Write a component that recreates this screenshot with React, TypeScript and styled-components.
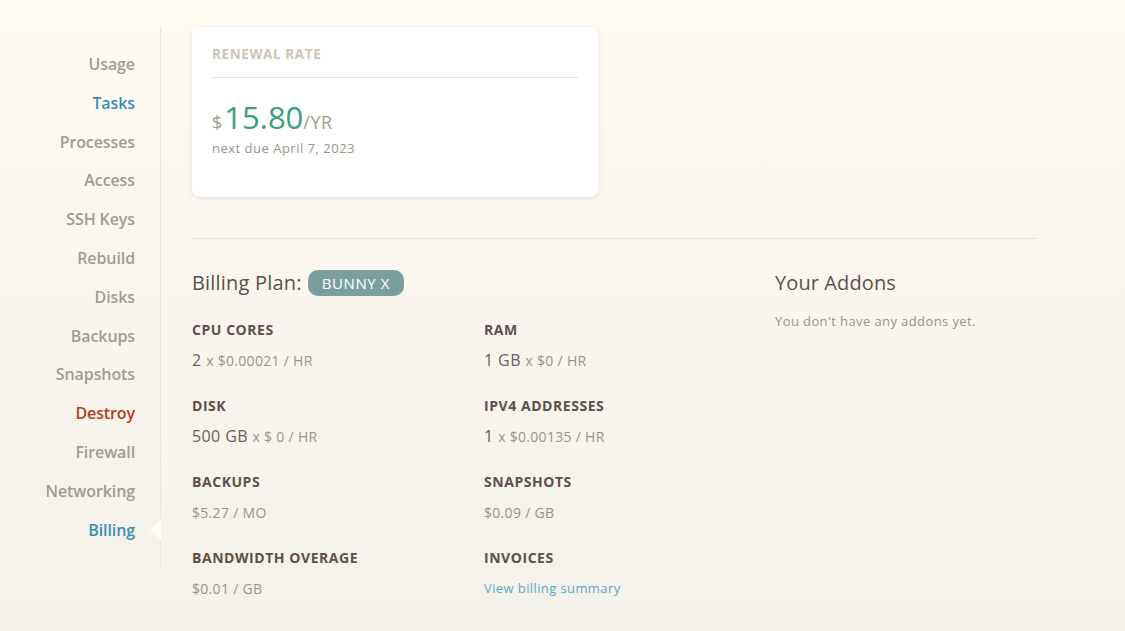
import React, { FunctionComponent } from "react";
import styled, { createGlobalStyle } from "styled-components";

type NavTone = "muted" | "active" | "danger";

const navItems: { label: string; tone: NavTone; current?: boolean }[] = [
  { label: "Usage", tone: "muted" },
  { label: "Tasks", tone: "active" },
  { label: "Processes", tone: "muted" },
  { label: "Access", tone: "muted" },
  { label: "SSH Keys", tone: "muted" },
  { label: "Rebuild", tone: "muted" },
  { label: "Disks", tone: "muted" },
  { label: "Backups", tone: "muted" },
  { label: "Snapshots", tone: "muted" },
  { label: "Destroy", tone: "danger" },
  { label: "Firewall", tone: "muted" },
  { label: "Networking", tone: "muted" },
  { label: "Billing", tone: "active", current: true },
];

const specs: { label: string; amount?: string; rate?: string; link?: string }[] = [
  { label: "CPU CORES", amount: "2", rate: "x $0.00021 / HR" },
  { label: "RAM", amount: "1 GB", rate: "x $0 / HR" },
  { label: "DISK", amount: "500 GB", rate: "x $ 0 / HR" },
  { label: "IPV4 ADDRESSES", amount: "1", rate: "x $0.00135 / HR" },
  { label: "BACKUPS", rate: "$5.27 / MO" },
  { label: "SNAPSHOTS", rate: "$0.09 / GB" },
  { label: "BANDWIDTH OVERAGE", rate: "$0.01 / GB" },
  { label: "INVOICES", link: "View billing summary" },
];

const toneColor: Record<NavTone, string> = {
  muted: "#a39b90",
  active: "#3a8db6",
  danger: "#b23c17",
};

const App: FunctionComponent = () => (
  <>
    <GlobalStyle />
    <Page>
      <Sidebar>
        {navItems.map((item) => (
          <NavLink key={item.label} $tone={item.tone} $current={item.current}>
            {item.label}
          </NavLink>
        ))}
      </Sidebar>
      <Main>
        <RateCard>
          <CardTitle>RENEWAL RATE</CardTitle>
          <Price>
            <span className="cur">$</span>
            <span className="num">15.80</span>
            <span className="per">/YR</span>
          </Price>
          <Due>next due April 7, 2023</Due>
        </RateCard>
        <Divider />
        <BillingGrid>
          <PlanHeading>
            Billing Plan: <Badge>BUNNY X</Badge>
          </PlanHeading>
          <Addons>
            <h3>Your Addons</h3>
            <p>You don't have any addons yet.</p>
          </Addons>
          {specs.map((spec) => (
            <Spec key={spec.label}>
              <h4>{spec.label}</h4>
              {spec.link ? (
                <a href="#">{spec.link}</a>
              ) : (
                <div className="value">
                  {spec.amount && <span className="amount">{spec.amount} </span>}
                  <span className="rate">{spec.rate}</span>
                </div>
              )}
            </Spec>
          ))}
        </BillingGrid>
      </Main>
    </Page>
  </>
);

export default App;

const GlobalStyle = createGlobalStyle`
  html, body {
    margin: 0;
    padding: 0;
  }
  body {
    font-family: "Open Sans", "DejaVu Sans", sans-serif;
    background: linear-gradient(180deg, #fefbf3 0%, #f4f0ea 100%);
    min-height: 631px;
    color: #5b5149;
  }
`;

const Page = styled.div`
  display: flex;
  align-items: flex-start;
  padding-top: 27px;
  height: 604px;
`;

const Sidebar = styled.nav`
  width: 161px;
  box-sizing: border-box;
  border-right: 1px solid #ebe6dd;
  padding: 18px 25px 21px 0;
  display: flex;
  flex-direction: column;
  align-items: flex-end;
`;

const NavLink = styled.a<{ $tone: NavTone; $current?: boolean }>`
  position: relative;
  font-size: 16px;
  font-weight: 600;
  line-height: 38.8px;
  letter-spacing: -0.1px;
  color: ${({ $tone }) => toneColor[$tone]};
  cursor: pointer;

  ${({ $current }) =>
    $current &&
    `
    &::after {
      content: "";
      position: absolute;
      right: -26px;
      top: 50%;
      margin-top: -10px;
      width: 0;
      height: 0;
      border-top: 10px solid transparent;
      border-bottom: 10px solid transparent;
      border-right: 11px solid #fefcf7;
    }
  `}
`;

const Main = styled.main`
  width: 845px;
  margin-left: 31px;
`;

const RateCard = styled.section`
  width: 406px;
  height: 170px;
  box-sizing: border-box;
  background: #ffffff;
  border-radius: 8px;
  box-shadow: 0 1px 4px rgba(120, 100, 70, 0.18);
  padding: 18px 20px;
`;

const CardTitle = styled.h5`
  margin: 0;
  font-size: 13.5px;
  font-weight: 700;
  letter-spacing: 0.6px;
  color: #cec5b9;
  line-height: 18px;
  padding-bottom: 14px;
  border-bottom: 1px solid #e6e3df;
`;

const Price = styled.div`
  margin-top: 21px;
  display: flex;
  align-items: baseline;
  line-height: 36px;

  .cur {
    font-size: 18px;
    color: #a39b90;
    margin-right: 2px;
  }
  .num {
    font-size: 31px;
    color: #3c9d7f;
  }
  .per {
    font-size: 18px;
    letter-spacing: 0.5px;
    color: #a39b90;
  }
`;

const Due = styled.p`
  margin: -2px 0 0;
  font-size: 13px;
  letter-spacing: 0.5px;
  line-height: 20px;
  color: #9b9389;
`;

const Divider = styled.hr`
  border: none;
  border-top: 1px solid #e6e1d9;
  margin: 41px 0 0;
`;

const BillingGrid = styled.div`
  display: grid;
  grid-template-columns: 292px 291px 1fr;
  grid-auto-rows: auto;
  padding-top: 30px;
`;

const PlanHeading = styled.h2`
  grid-column: 1 / span 2;
  margin: 0 0 12px;
  font-size: 20px;
  font-weight: 400;
  letter-spacing: 0.2px;
  line-height: 28px;
  display: flex;
  align-items: center;
  gap: 6px;
  color: #5b5149;
`;

const Badge = styled.span`
  background: #7a9e9e;
  color: #ffffff;
  font-size: 15px;
  letter-spacing: 0.6px;
  line-height: 26px;
  padding: 0 14px;
  border-radius: 10px;
`;

const Addons = styled.div`
  grid-column: 3;
  grid-row: 1 / span 5;

  h3 {
    margin: 0;
    font-size: 20px;
    font-weight: 400;
    letter-spacing: 0.1px;
    line-height: 28px;
    color: #5b5149;
  }
  p {
    margin: 14px 0 0;
    font-size: 13px;
    letter-spacing: 0.4px;
    line-height: 20px;
    color: #9b9389;
  }
`;

const Spec = styled.div`
  padding-top: 10px;
  height: 66px;

  h4 {
    margin: 0;
    font-size: 14px;
    font-weight: 700;
    letter-spacing: 0.55px;
    line-height: 22px;
    color: #5b5149;
  }

  .value,
  a {
    display: block;
    margin-top: 8px;
    line-height: 22px;
  }

  .amount {
    font-size: 16px;
    letter-spacing: 0.4px;
    color: #6a6058;
  }
  .rate {
    font-size: 14px;
    letter-spacing: 0.3px;
    color: #9b9389;
  }
  a {
    font-size: 13px;
    letter-spacing: 0.4px;
    color: #5aaac7;
    text-decoration: none;
  }
`;
